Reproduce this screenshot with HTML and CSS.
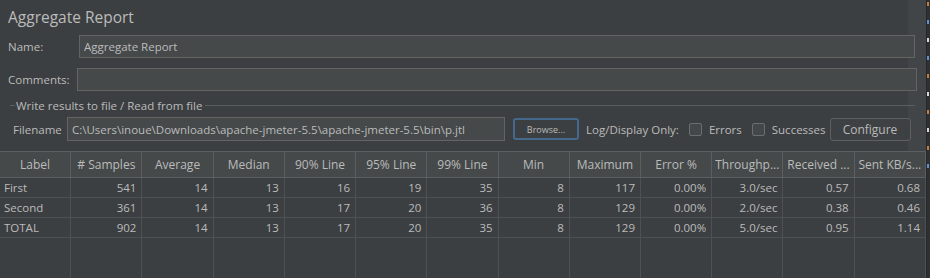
FILE: index.html
```html
<!DOCTYPE html>
<html lang="en">
<head>
    <meta charset="UTF-8">
    <meta name="viewport" content="width=device-width, initial-scale=1.0">
    <title>Aggregate Report</title>
    <link rel="stylesheet" href="styles.css">
</head>
<body>
    <div class="window">
        <div class="panel">
            <div class="top">
                <h1 class="title">Aggregate Report</h1>

                <div class="field-row">
                    <span class="field-label name-label">Name:</span>
                    <input class="text-input" type="text" value="Aggregate Report">
                </div>
                <div class="field-row comments-row">
                    <span class="field-label comments-label">Comments:</span>
                    <input class="text-input" type="text">
                </div>

                <div class="group-title">Write results to file / Read from file</div>
                <div class="file-row">
                    <span class="file-label">Filename</span>
                    <input class="text-input file-input" type="text" value="C:\Users\inoue\Downloads\apache-jmeter-5.5\apache-jmeter-5.5\bin\p.jtl">
                    <button class="browse-button">Browse...</button>
                    <span class="log-label">Log/Display Only:</span>
                    <label class="check"><span class="check-box"></span>Errors</label>
                    <label class="check"><span class="check-box"></span>Successes</label>
                    <button class="configure-button">Configure</button>
                </div>
            </div>

            <table class="report">
                <thead>
                    <tr>
                        <th>Label</th>
                        <th># Samples</th>
                        <th>Average</th>
                        <th>Median</th>
                        <th>90% Line</th>
                        <th>95% Line</th>
                        <th>99% Line</th>
                        <th>Min</th>
                        <th>Maximum</th>
                        <th>Error %</th>
                        <th>Throughp...</th>
                        <th>Received ...</th>
                        <th>Sent KB/s...</th>
                    </tr>
                </thead>
                <tbody>
                    <tr>
                        <td class="label">First</td>
                        <td>541</td><td>14</td><td>13</td><td>16</td><td>19</td><td>35</td>
                        <td>8</td><td>117</td><td>0.00%</td><td>3.0/sec</td><td>0.57</td><td>0.68</td>
                    </tr>
                    <tr>
                        <td class="label">Second</td>
                        <td>361</td><td>14</td><td>13</td><td>17</td><td>20</td><td>36</td>
                        <td>8</td><td>129</td><td>0.00%</td><td>2.0/sec</td><td>0.38</td><td>0.46</td>
                    </tr>
                    <tr>
                        <td class="label">TOTAL</td>
                        <td>902</td><td>14</td><td>13</td><td>17</td><td>20</td><td>35</td>
                        <td>8</td><td>129</td><td>0.00%</td><td>5.0/sec</td><td>0.95</td><td>1.14</td>
                    </tr>
                    <tr class="filler">
                        <td></td><td></td><td></td><td></td><td></td><td></td><td></td>
                        <td></td><td></td><td></td><td></td><td></td><td></td>
                    </tr>
                </tbody>
            </table>
        </div>

        <div class="edge">
            <span class="mark orange"></span>
            <span class="mark blue"></span>
            <span class="mark white"></span>
            <span class="mark blue"></span>
            <span class="mark orange"></span>
            <span class="mark white"></span>
            <span class="mark orange"></span>
            <span class="mark white"></span>
            <span class="mark orange"></span>
            <span class="mark blue"></span>
        </div>
    </div>
</body>
</html>
```

FILE: styles.css
```css
body {
    margin: 0;
    background-color: #3c3f41;
    color: #bbbbbb;
    font-family: "Open Sans", "Noto Sans", sans-serif;
    font-size: 11.5px;
    height: 100vh;
    overflow: hidden;
}
.window {
    display: flex;
    height: 278px;
}
.panel {
    width: 927px;
    display: flex;
    flex-direction: column;
}
.top {
    height: 152px;
    background: linear-gradient(to right, #3c3f41 908px, #424547 908px);
}
.title {
    margin: 0;
    height: 35px;
    padding: 6px 0 0 8px;
    box-sizing: border-box;
    font-size: 15.5px;
    font-weight: normal;
    line-height: 22px;
}
.field-row {
    display: flex;
    align-items: center;
    height: 23px;
    margin-right: 11px;
}
.comments-row {
    margin-top: 10px;
    margin-right: 9px;
}
.field-label {
    padding-left: 8px;
    box-sizing: border-box;
}
.name-label {
    width: 79px;
}
.comments-label {
    width: 77px;
}
.text-input {
    flex: 1;
    height: 23px;
    box-sizing: border-box;
    margin: 0;
    padding: 0 4px;
    background-color: #45494a;
    border: 1px solid #646464;
    color: #bbbbbb;
    font-family: inherit;
    font-size: 11.5px;
    outline: none;
}
.group-title {
    display: flex;
    align-items: center;
    height: 16px;
    margin: 6px 11px 0 10px;
}
.group-title::before,
.group-title::after {
    content: "";
    height: 1px;
    background-color: #5b5e60;
}
.group-title::before {
    width: 5px;
    margin-right: 1px;
}
.group-title::after {
    flex: 1;
    margin-left: 3px;
}
.file-row {
    display: flex;
    align-items: center;
    height: 24px;
    margin-top: 4px;
    padding-left: 13px;
}
.file-label {
    width: 54px;
}
.file-input {
    flex: none;
    width: 438px;
    height: 24px;
}
.browse-button {
    width: 66px;
    height: 22px;
    margin-left: 8px;
    padding: 0;
    background-color: #3c3f41;
    border: 2px solid #46688f;
    border-radius: 3px;
    color: #bbbbbb;
    font-family: inherit;
    font-size: 9px;
}
.log-label {
    margin-left: 7px;
    margin-right: 10px;
}
.check {
    display: flex;
    align-items: center;
    margin-right: 10px;
}
.check-box {
    width: 13px;
    height: 13px;
    margin-right: 7px;
    box-sizing: border-box;
    border: 1px solid #6b6e70;
    border-radius: 2px;
    background-color: #43474a;
}
.configure-button {
    width: 81px;
    height: 23px;
    margin-left: -6px;
    padding: 0;
    background-color: #3e4143;
    border: 1px solid #5e6060;
    border-radius: 3px;
    color: #bbbbbb;
    font-family: inherit;
    font-size: 12px;
}
.report {
    width: 926px;
    table-layout: fixed;
    border-collapse: separate;
    border-spacing: 0;
}
.report th {
    height: 25px;
    padding: 0;
    background-color: #45494a;
    border-top: 1px solid #5c5f61;
    border-bottom: 1px solid #5c5f61;
    border-right: 1px solid #5c5f61;
    font-size: 12px;
    font-weight: normal;
    text-align: center;
    white-space: nowrap;
    overflow: hidden;
}
.report td {
    height: 19px;
    padding: 0 5px 0 4px;
    border-right: 1px solid #4e5153;
    border-bottom: 1px solid #4e5153;
    text-align: right;
    line-height: 19px;
}
.report td.label {
    text-align: left;
}
.report .filler td {
    height: 40px;
    border-bottom: none;
}
.edge {
    width: 3px;
    display: flex;
    flex-direction: column;
    gap: 14px;
    padding-top: 2px;
    background-color: #2e3032;
    border-left: 1px solid #26282a;
}
.mark {
    width: 2px;
    height: 4px;
}
.orange {
    background-color: #c57b3b;
}
.blue {
    background-color: #5c8fd6;
}
.white {
    background-color: #d6d6d6;
}
```
